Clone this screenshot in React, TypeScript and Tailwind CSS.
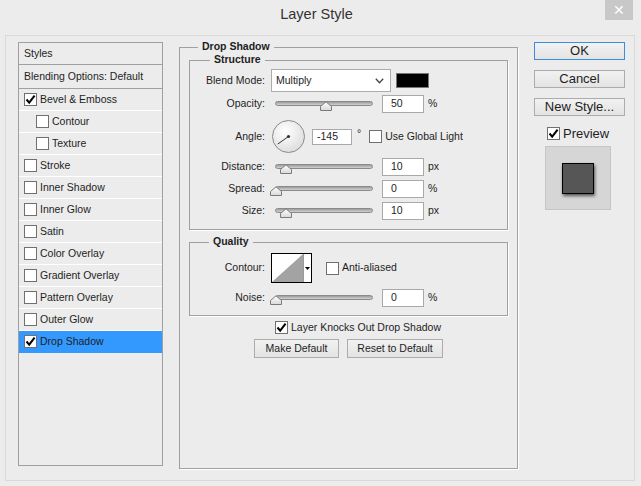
import React from 'react'

function Check({ checked }: { checked?: boolean }) {
  return (
    <span className="flex h-[13px] w-[13px] shrink-0 items-center justify-center border border-[#707070] bg-white">
      {checked && (
        <svg width="11" height="11" viewBox="0 0 11 11">
          <path d="M1.5 5.5 L4.2 8.6 L9.6 1.6" fill="none" stroke="#000" strokeWidth="2" />
        </svg>
      )}
    </span>
  )
}

function Slider({ thumb }: { thumb: number }) {
  return (
    <div className="relative h-[18px] w-[103px] shrink-0 pl-[4px] pr-[1px] pt-[6px]">
      <div className="h-[5px] rounded-full border border-[#8a8a8a] bg-gradient-to-b from-[#9c9c9c] to-[#d2d2d2]" />
      <svg
        className="absolute top-[6px]"
        style={{ left: thumb }}
        width="12"
        height="10"
        viewBox="0 0 12 10"
      >
        <defs>
          <linearGradient id="thumbg" x1="0" y1="0" x2="0" y2="1">
            <stop offset="0" stopColor="#ffffff" />
            <stop offset="1" stopColor="#d8d8d8" />
          </linearGradient>
        </defs>
        <path d="M0.5 9.5 L0.5 5.5 L6 0.8 L11.5 5.5 L11.5 9.5 Z" fill="url(#thumbg)" stroke="#7a7a7a" />
      </svg>
    </div>
  )
}

function NumBox({ value, w = 42, pl = 8, h = 18 }: { value: string; w?: number; pl?: number; h?: number }) {
  return (
    <div
      className="flex shrink-0 items-center border border-[#a9a9a9] bg-white text-[10.5px]"
      style={{ width: w, height: h, paddingLeft: pl }}
    >
      {value}
    </div>
  )
}

function Label({ children }: { children: React.ReactNode }) {
  return <div className="w-[76px] shrink-0 pr-[1px] text-right text-[10.5px]">{children}</div>
}

function SliderRow({ label, thumb, value, unit, mt }: { label: string; thumb: number; value: string; unit: string; mt: string }) {
  return (
    <div className={`flex h-[18px] items-center ${mt}`}>
      <Label>{label}</Label>
      <div className="ml-[5px]">
        <Slider thumb={thumb} />
      </div>
      <div className="ml-[8px]">
        <NumBox value={value} />
      </div>
      <div className="ml-[4px] text-[10.5px]">{unit}</div>
    </div>
  )
}

function Group({
  title,
  left,
  className,
  children,
}: {
  title: string
  left: string
  className: string
  children?: React.ReactNode
}) {
  return (
    <div className={`relative border border-[#a0a0a0] shadow-[1px_1px_0_#ffffff] ${className}`}>
      <span className={`absolute -top-[8px] ${left} bg-[#ececec] px-[4px] text-[10.5px] font-bold leading-[13px]`}>
        {title}
      </span>
      {children}
    </div>
  )
}

function Btn({ children, primary, className }: { children: React.ReactNode; primary?: boolean; className: string }) {
  return (
    <div
      className={`flex items-center justify-center border bg-gradient-to-b from-[#f2f2f2] to-[#e3e3e3] ${
        primary ? 'border-[#3c8ddc]' : 'border-[#acacac]'
      } ${className}`}
    >
      {children}
    </div>
  )
}

const listItems: { name: string; checked?: boolean; sub?: boolean; active?: boolean }[] = [
  { name: 'Bevel & Emboss', checked: true },
  { name: 'Contour', sub: true },
  { name: 'Texture', sub: true },
  { name: 'Stroke' },
  { name: 'Inner Shadow' },
  { name: 'Inner Glow' },
  { name: 'Satin' },
  { name: 'Color Overlay' },
  { name: 'Gradient Overlay' },
  { name: 'Pattern Overlay' },
  { name: 'Outer Glow' },
  { name: 'Drop Shadow', checked: true, active: true },
]

export default function App() {
  return (
    <div className="flex h-[486px] w-[641px] flex-col bg-[#ececec] font-['Liberation_Sans',Arial,sans-serif] text-[#1e1e1e]">
      {/* title bar */}
      <div className="flex h-[35px] shrink-0">
        <div className="flex-1" />
        <div className="pt-[4px] text-[14.5px] text-[#333]">Layer Style</div>
        <div className="flex flex-1 justify-end pr-[8px]">
          <div className="flex h-[20px] w-[28px] items-center justify-center bg-[#c8c8c8] text-[14px] leading-none text-white">
            ✕
          </div>
        </div>
      </div>

      <div className="ml-[5px] mr-[6px] flex h-[446px] border border-[#d9d9d9] pl-[12px] pt-[6px]">
        {/* styles list */}
        <div className="h-[424px] w-[145px] shrink-0 border border-[#a0a0a0] text-[10.5px]">
          <div className="flex h-[22px] items-center border-b border-[#a0a0a0] pl-[5px]">Styles</div>
          <div className="flex h-[24px] items-center border-b border-[#a0a0a0] pl-[5px]">Blending Options: Default</div>
          {listItems.map((it) => (
            <div
              key={it.name}
              className={`flex h-[22px] items-center gap-[3px] border-b ${
                it.active ? 'border-[#3399ff] bg-[#3399ff]' : 'border-white'
              } ${it.sub ? 'pl-[17px]' : 'pl-[5px]'}`}
            >
              <Check checked={it.checked} />
              <span>{it.name}</span>
            </div>
          ))}
        </div>

        {/* main panel */}
        <Group title="Drop Shadow" left="left-[18px]" className="ml-[16px] mt-[5px] h-[422px] w-[339px] shrink-0">
          <Group title="Structure" left="left-[20px]" className="ml-[9px] mt-[12px] h-[170px] w-[319px]">
            <div className="mt-[8px] flex h-[23px] items-center">
              <Label>Blend Mode:</Label>
              <div className="ml-[5px] flex h-[23px] w-[120px] items-center justify-between border border-[#acacac] bg-white pl-[4px] pr-[6px] text-[10.5px]">
                <span>Multiply</span>
                <svg width="9" height="6" viewBox="0 0 9 6">
                  <path d="M0.8 0.8 L4.5 4.8 L8.2 0.8" fill="none" stroke="#444" strokeWidth="1.3" />
                </svg>
              </div>
              <div className="ml-[5px] h-[15px] w-[33px] border border-[#777] bg-black" />
            </div>

            <SliderRow label="Opacity:" thumb={49} value="50" unit="%" mt="mt-[3px]" />

            <div className="mt-[7px] flex h-[33px] items-center">
              <Label>Angle:</Label>
              <svg className="ml-[6px] shrink-0" width="33" height="33" viewBox="0 0 33 33">
                <defs>
                  <radialGradient id="dialg" cx="0.4" cy="0.35" r="0.7">
                    <stop offset="0" stopColor="#ffffff" />
                    <stop offset="1" stopColor="#dcdcdc" />
                  </radialGradient>
                </defs>
                <circle cx="16.5" cy="16.5" r="16" fill="url(#dialg)" stroke="#8a8a8a" />
                <line x1="16.5" y1="16.5" x2="5.8" y2="24" stroke="#333" strokeWidth="1" />
                <circle cx="16.5" cy="16.5" r="1.6" fill="#333" />
              </svg>
              <div className="ml-[7px]">
                <NumBox value="-145" w={40} pl={4} h={16} />
              </div>
              <div className="ml-[5px] -mt-[6px] text-[10.5px]">°</div>
              <div className="ml-[8px]">
                <Check />
              </div>
              <div className="ml-[3px] text-[10.5px]">Use Global Light</div>
            </div>

            <SliderRow label="Distance:" thumb={9} value="10" unit="px" mt="mt-[5px]" />
            <SliderRow label="Spread:" thumb={-1} value="0" unit="%" mt="mt-[4px]" />
            <SliderRow label="Size:" thumb={9} value="10" unit="px" mt="mt-[4px]" />
          </Group>

          <Group title="Quality" left="left-[19px]" className="ml-[9px] mt-[12px] h-[74px] w-[319px]">
            <div className="mt-[10px] flex h-[30px] items-center">
              <Label>Contour:</Label>
              <div className="ml-[5px] flex h-[30px] w-[41px] border border-black bg-white">
                <svg width="31" height="28" viewBox="0 0 31 28" className="shrink-0">
                  <rect width="31" height="28" fill="#fff" />
                  <polygon points="0,28 31,0 31,28" fill="#a3a3a3" />
                </svg>
                <div className="flex flex-1 items-center justify-center border-l border-[#9a9a9a]">
                  <svg width="5" height="3" viewBox="0 0 5 3">
                    <polygon points="0,0 5,0 2.5,3" fill="#000" />
                  </svg>
                </div>
              </div>
              <div className="ml-[14px]">
                <Check />
              </div>
              <div className="ml-[3px] text-[10.5px]">Anti-aliased</div>
            </div>
            <SliderRow label="Noise:" thumb={-1} value="0" unit="%" mt="mt-[6px]" />
          </Group>

          <div className="ml-[95px] mt-[5px] flex h-[13px] items-center text-[10.5px]">
            <Check checked />
            <span className="ml-[3px]">Layer Knocks Out Drop Shadow</span>
          </div>

          <div className="mt-[5px] flex justify-center gap-[8px] text-[10.5px]">
            <Btn className="h-[19px] w-[85px]">Make Default</Btn>
            <Btn className="h-[19px] w-[96px]">Reset to Default</Btn>
          </div>
        </Group>

        {/* right column */}
        <div className="ml-[16px] flex w-[91px] shrink-0 flex-col text-[13px]">
          <Btn primary className="h-[18px]">OK</Btn>
          <Btn className="mt-[10px] h-[18px]">Cancel</Btn>
          <Btn className="mt-[10px] h-[18px]">New Style...</Btn>
          <div className="ml-[13px] mt-[11px] flex h-[13px] items-center">
            <Check checked />
            <span className="ml-[3px]">Preview</span>
          </div>
          <div className="ml-[11px] mt-[6px] flex h-[64px] w-[66px] items-center justify-center border border-[#c6c6c6] bg-[#d6d6d6]">
            <div className="h-[31px] w-[32px] border border-black bg-[#565656] shadow-[1px_2px_3px_rgba(0,0,0,0.6)]" />
          </div>
        </div>
      </div>
    </div>
  )
}
